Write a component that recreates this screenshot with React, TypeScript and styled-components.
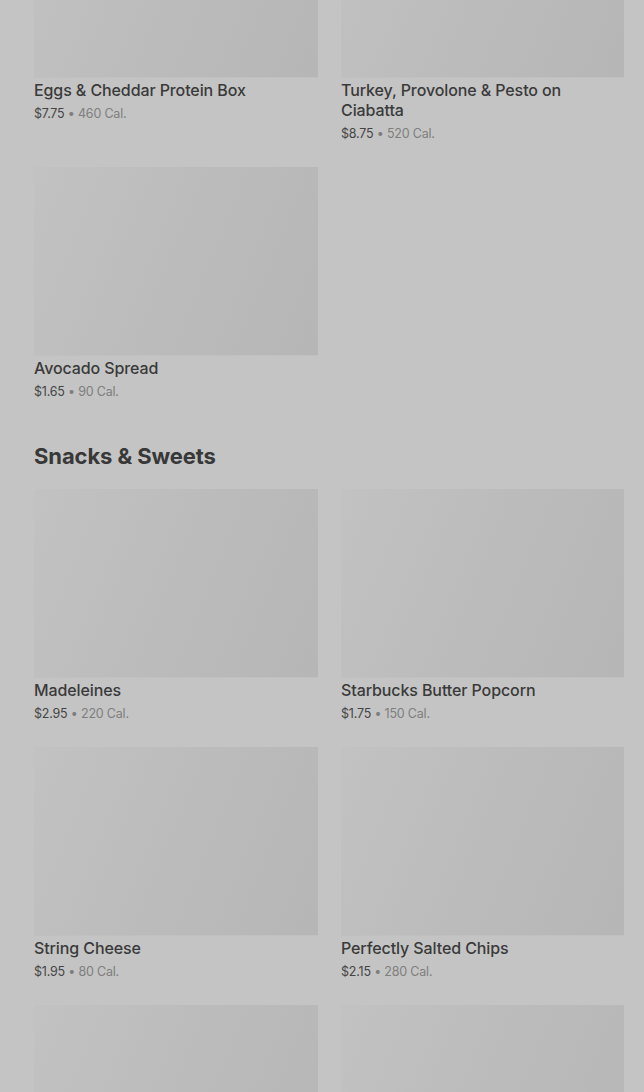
import React from "react";
import styled, { createGlobalStyle } from "styled-components";

const Global = createGlobalStyle`
  html, body { margin: 0; padding: 0; background: #c4c4c4; }
  body { font-family: Inter, "Noto Sans", Roboto, sans-serif; overflow: hidden; }
`;

const Page = styled.main`
  width: 644px;
  box-sizing: border-box;
  padding: 0 20px 0 34px;
  margin-top: -111px;
`;

const Section = styled.section<{ $first?: boolean }>`
  padding-top: ${(p) => (p.$first ? "0" : "39px")};
`;

const Heading = styled.h2`
  margin: 0 0 18px;
  font-size: 22px;
  line-height: 30px;
  font-weight: 700;
  color: #383838;
  letter-spacing: -0.1px;
`;

const Grid = styled.div`
  display: grid;
  grid-template-columns: 284px 283px;
  column-gap: 23px;
  row-gap: 23px;
  align-items: start;
`;

const Card = styled.article`
  display: flex;
  flex-direction: column;
`;

const Thumb = styled.div`
  height: 188px;
  background: linear-gradient(112deg, #c2c2c2 0%, #bcbcbc 45%, #b6b6b6 100%);
  box-shadow: 0 1px 0 #c0c0c0;
`;

const Title = styled.h3`
  margin: 3px 0 0;
  font-size: 16px;
  line-height: 20px;
  font-weight: 500;
  color: #3a3a3a;
  letter-spacing: -0.1px;
`;

const Meta = styled.p`
  margin: 4px 0 0;
  font-size: 12.5px;
  line-height: 20px;
  color: #444444;
  letter-spacing: -0.2px;
`;

const Cal = styled.span`
  color: #7e7e7e;
`;

type Item = { name: string; price: string; cal: string };

const breakfast: Item[] = [
  { name: "Eggs & Cheddar Protein Box", price: "$7.75", cal: "460 Cal." },
  { name: "Turkey, Provolone & Pesto on Ciabatta", price: "$8.75", cal: "520 Cal." },
  { name: "Avocado Spread", price: "$1.65", cal: "90 Cal." },
];

const snacks: Item[] = [
  { name: "Madeleines", price: "$2.95", cal: "220 Cal." },
  { name: "Starbucks Butter Popcorn", price: "$1.75", cal: "150 Cal." },
  { name: "String Cheese", price: "$1.95", cal: "80 Cal." },
  { name: "Perfectly Salted Chips", price: "$2.15", cal: "280 Cal." },
  { name: "Marshmallow Dream Bar", price: "$2.45", cal: "210 Cal." },
  { name: "Chocolate Chip Cookie", price: "$2.45", cal: "360 Cal." },
];

const ItemCard = ({ item }: { item: Item }) => (
  <Card>
    <Thumb />
    <Title>{item.name}</Title>
    <Meta>
      {item.price} <Cal>• {item.cal}</Cal>
    </Meta>
  </Card>
);

export default function App() {
  return (
    <>
      <Global />
      <Page>
        <Section $first>
          <Grid>
            {breakfast.map((it) => (
              <ItemCard key={it.name} item={it} />
            ))}
          </Grid>
        </Section>
        <Section>
          <Heading>Snacks &amp; Sweets</Heading>
          <Grid>
            {snacks.map((it) => (
              <ItemCard key={it.name} item={it} />
            ))}
          </Grid>
        </Section>
      </Page>
    </>
  );
}
